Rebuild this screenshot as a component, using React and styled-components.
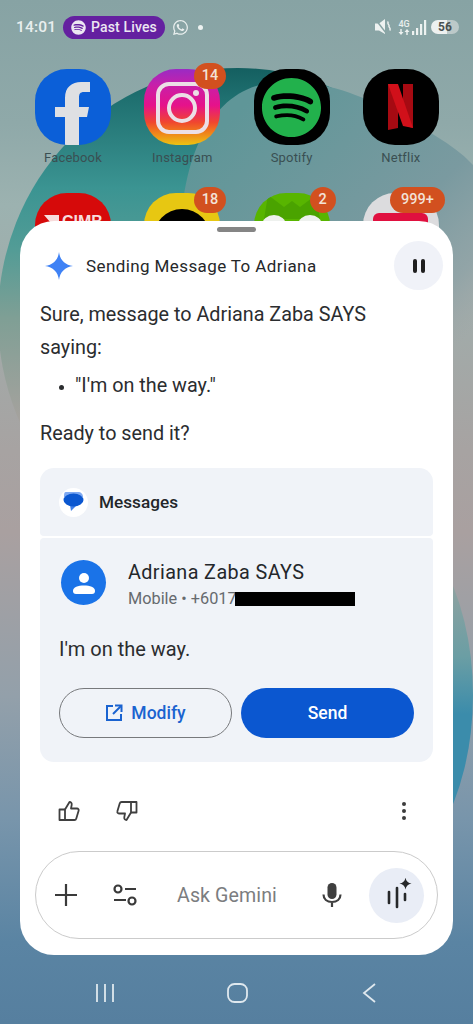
import React from "react";
import styled, { createGlobalStyle } from "styled-components";
import { FaSpotify, FaWhatsapp } from "react-icons/fa";

const Global = createGlobalStyle`
  html, body { margin: 0; padding: 0; overflow: hidden; }
  body { font-family: Roboto, "Liberation Sans", sans-serif; }
`;

const Screen = styled.div`
  position: relative;
  width: 473px;
  height: 1024px;
  overflow: hidden;
  display: flex;
  flex-direction: column;
  background: linear-gradient(180deg, #87a3a4 0, #8fa9a9 12%, #9cb2b0 20%, #a7a3a2 44%, #a9a0a0 52%, #93a0aa 68%, #7895ab 80%, #5a84a3 92%, #567f9f 100%);
`;
const Wallpaper = styled.svg`
  position: absolute;
  inset: 0;
`;
const StatusBar = styled.div`
  position: relative;
  height: 54px;
  flex: none;
  padding: 0 14px 0 16px;
  display: flex;
  align-items: center;
  color: #e9efee;
`;
const Clock = styled.span`
  font-size: 15.5px;
  font-weight: 500;
  width: 47px;
  letter-spacing: 0.2px;
`;
const MediaPill = styled.div`
  display: flex;
  align-items: center;
  gap: 5px;
  width: 102px;
  height: 23px;
  box-sizing: border-box;
  padding-left: 8px;
  border-radius: 12px;
  background: #6420a0;
  font-size: 14px;
  font-weight: 500;
  letter-spacing: 0.15px;
  color: #ece6f2;
`;
const ChatIcon = styled(FaWhatsapp)`
  margin-left: 7px;
  width: 17px;
  height: 17px;
`;
const Dot = styled.span`
  margin-left: 9px;
  width: 5px;
  height: 5px;
  border-radius: 50%;
  background: #edf2f1;
`;
const StatusRight = styled.div`
  margin-left: auto;
  display: flex;
  align-items: center;
`;
const NetBlock = styled.div`
  display: flex;
  flex-direction: column;
  align-items: center;
  margin: 0 1px 0 5px;
  width: 14px;
  font-size: 9px;
  line-height: 9px;
  font-weight: 500;
`;
const Battery = styled.div`
  margin-left: 4px;
  width: 28px;
  height: 14px;
  border-radius: 7px;
  background: linear-gradient(90deg, #eef1f0 58%, #bcc9c9 58%);
  color: #4a5252;
  font-size: 12px;
  font-weight: 700;
  line-height: 14px;
  text-align: center;
`;
const AppGrid = styled.div`
  position: relative;
  padding: 15px 0 0 35px;
  display: grid;
  grid-template-columns: repeat(4, 76px);
  grid-auto-rows: 124px;
  column-gap: 33.3px;
`;
const AppCell = styled.div`
  position: relative;
  display: flex;
  flex-direction: column;
  align-items: center;
`;
const AppIcon = styled.div`
  position: relative;
  width: 76px;
  height: 76px;
  flex: none;
  border-radius: 42%;
  overflow: hidden;
  background: ${(p) => p.$bg};
  display: flex;
  align-items: center;
  justify-content: center;
`;
const AppLabel = styled.span`
  margin-top: 5px;
  font-size: 13px;
  line-height: 16px;
  letter-spacing: 0.2px;
  color: #3a4f52;
`;
const Badge = styled.span`
  position: absolute;
  top: -6px;
  right: ${(p) => p.$right}px;
  height: 26px;
  min-width: 26px;
  box-sizing: border-box;
  padding: 0 ${(p) => p.$pad}px;
  border-radius: 13px;
  background: #d2501f;
  color: #f3e2d8;
  font-size: 14.5px;
  font-weight: 500;
  line-height: 26px;
  text-align: center;
`;
const BrandText = styled.span`
  position: absolute;
  left: 27px;
  top: 20px;
  color: #f7dcdc;
  font: 700 16px "Liberation Sans", sans-serif;
`;
const Sheet = styled.div`
  position: absolute;
  left: 20px;
  top: 221px;
  width: 433px;
  height: 734px;
  box-sizing: border-box;
  border-radius: 34px;
  background: #fff;
  display: flex;
  flex-direction: column;
  color: #1f1f1f;
`;
const Handle = styled.div`
  width: 39px;
  height: 5px;
  margin: 6px auto 0;
  border-radius: 3px;
  background: #858585;
`;
const SheetHeader = styled.div`
  display: flex;
  align-items: center;
  margin-top: 9px;
  padding: 0 10px 0 25px;
`;
const SheetTitle = styled.span`
  margin-left: 13px;
  font-size: 17px;
  letter-spacing: 0.4px;
  color: #26282a;
`;
const PauseButton = styled.div`
  margin-left: auto;
  width: 49px;
  height: 49px;
  border-radius: 50%;
  background: #f0f2f8;
  display: flex;
  align-items: center;
  justify-content: center;
  gap: 4px;
`;
const PauseBar = styled.span`
  width: 4px;
  height: 14px;
  border-radius: 2px;
  background: #1f1f1f;
`;
const Reply = styled.div`
  margin-top: 8px;
  padding: 0 40px 0 20px;
  font-size: 19.8px;
  line-height: 33px;
  color: #2b2d2f;
`;
const ReplyLine = styled.p`
  margin: 0;
`;
const ReplyList = styled.ul`
  margin: 5px 0 15px;
  padding: 0 0 0 35px;
  list-style: disc;
  & li::marker { font-size: 15px; }
`;
const ActionCard = styled.div`
  margin: 18px 20px 0;
  display: flex;
  flex-direction: column;
  gap: 2px;
`;
const CardHeader = styled.div`
  height: 68px;
  display: flex;
  align-items: center;
  padding-left: 19px;
  background: #f0f3f8;
  border-radius: 14px 14px 4px 4px;
`;
const AppBadge = styled.div`
  width: 29px;
  height: 29px;
  border-radius: 50%;
  background: #fff;
  display: flex;
  align-items: center;
  justify-content: center;
`;
const CardAppName = styled.span`
  margin-left: 11px;
  font-size: 17.2px;
  font-weight: 500;
  color: #23262a;
`;
const CardBody = styled.div`
  height: 224px;
  box-sizing: border-box;
  padding: 22px 19px 0;
  background: #f0f3f8;
  border-radius: 4px 4px 14px 14px;
  display: flex;
  flex-direction: column;
`;
const ContactRow = styled.div`
  display: flex;
  padding-left: 2px;
`;
const Avatar = styled.div`
  width: 45px;
  height: 45px;
  border-radius: 50%;
  background: #1a73e8;
  display: flex;
  align-items: center;
  justify-content: center;
`;
const ContactText = styled.div`
  margin-left: 22px;
  display: flex;
  flex-direction: column;
`;
const ContactName = styled.span`
  font-size: 19.8px;
  line-height: 26px;
  letter-spacing: 0.4px;
  color: #24272b;
`;
const ContactPhone = styled.span`
  display: flex;
  align-items: center;
  margin-top: 3px;
  font-size: 16.3px;
  line-height: 20px;
  color: #666a6e;
`;
const Redacted = styled.span`
  margin-left: -2px;
  width: 120px;
  height: 14px;
  background: #000;
`;
const MessageText = styled.p`
  margin: 28px 0 0;
  font-size: 20px;
  line-height: 24px;
  color: #2b2d2f;
`;
const ButtonRow = styled.div`
  margin-top: 27px;
  display: flex;
  gap: 9px;
`;
const PillButton = styled.div`
  width: 173px;
  height: 50px;
  box-sizing: border-box;
  border-radius: 25px;
  display: flex;
  align-items: center;
  justify-content: center;
  gap: 8px;
  font-size: 17.5px;
  font-weight: 500;
  border: ${(p) => (p.$primary ? "none" : "1px solid #77797c")};
  background: ${(p) => (p.$primary ? "#0b57d0" : "transparent")};
  color: ${(p) => (p.$primary ? "#fff" : "#1a63d0")};
`;
const Feedback = styled.div`
  margin-top: 38px;
  height: 22px;
  display: flex;
  align-items: center;
  padding: 0 47px 0 38px;
  gap: 36px;
`;
const MoreDots = styled.div`
  margin-left: auto;
  display: flex;
  flex-direction: column;
  gap: 3px;
`;
const MoreDot = styled.span`
  width: 4px;
  height: 4px;
  border-radius: 50%;
  background: #3c3c3c;
`;
const InputBar = styled.div`
  margin: auto 15px 16px;
  height: 88px;
  box-sizing: border-box;
  border: 1px solid #cbcbcb;
  border-radius: 44px;
  display: flex;
  align-items: center;
  padding: 0 13px 0 18px;
`;
const Placeholder = styled.span`
  margin-left: 40px;
  flex: 1;
  font-size: 19.6px;
  letter-spacing: 0.1px;
  color: #7b7d80;
`;
const FilterSlot = styled.div`
  margin-left: 35px;
  display: flex;
`;
const MicSlot = styled.div`
  margin-right: 25px;
  display: flex;
`;
const LiveButton = styled.div`
  width: 55px;
  height: 55px;
  border-radius: 50%;
  background: #e9edf6;
  display: flex;
  align-items: center;
  justify-content: center;
`;
const NavBar = styled.div`
  position: absolute;
  left: 0;
  right: 0;
  bottom: 0;
  height: 62px;
  padding-left: 1px;
  display: flex;
  justify-content: center;
  align-items: center;
`;
const NavSlot = styled.div`
  width: 132px;
  display: flex;
  justify-content: center;
`;

const apps = [
  {
    name: "Facebook",
    bg: "#0b5fd8",
    art: (
      <svg width="76" height="76" viewBox="0 0 76 76">
        <path d="M30 76V48H20V38H30V29C30 18 37 13 46 13H55V23H49C45 23 44 25 44 29V38H54L52 48H44V76Z" fill="#dfe0e3" />
      </svg>
    ),
  },
  {
    name: "Instagram",
    badge: "14",
    badgeRight: -6,
    bg: "linear-gradient(180deg,#9a2bc4 0,#c91fa8 22%,#e6128a 48%,#f0462f 70%,#f07a1c 82%,#ecc312 100%)",
    art: (
      <svg width="76" height="76" viewBox="0 0 76 76" fill="none" stroke="#ecdfe6" strokeWidth="4">
        <rect x="14" y="15" width="49" height="48" rx="11" />
        <circle cx="38" cy="39" r="13" />
        <circle cx="52" cy="24" r="3" fill="#ecdfe6" stroke="none" />
      </svg>
    ),
  },
  {
    name: "Spotify",
    bg: "#000",
    art: <FaSpotify size={61} color="#22b14c" />,
  },
  {
    name: "Netflix",
    bg: "#000",
    art: (
      <svg width="76" height="76" viewBox="0 0 76 76">
        <path d="M40 15H50V59L40 56Z" fill="#a60a12" />
        <path d="M25 15H35V59L25 61Z" fill="#a60a12" />
        <path d="M25 15H35L50 59L40 57Z" fill="#d1101a" />
      </svg>
    ),
  },
  {
    bg: "#d60a0a",
    art: (
      <>
        <svg width="76" height="76" viewBox="0 0 76 76">
          <path d="M9 22H24V36H18L15 29Z" fill="#f7dcdc" />
        </svg>
        <BrandText>CIMB</BrandText>
      </>
    ),
  },
  {
    badge: "18",
    badgeRight: -6,
    bg: "#e7c712",
    art: (
      <svg width="76" height="76" viewBox="0 0 76 76">
        <ellipse cx="38" cy="46" rx="29" ry="30" fill="#000" />
        <circle cx="23" cy="33" r="5" fill="#e7c712" />
        <circle cx="53" cy="33" r="5" fill="#e7c712" />
      </svg>
    ),
  },
  {
    badge: "2",
    badgeRight: -6,
    bg: "#58b500",
    art: (
      <svg width="76" height="76" viewBox="0 0 76 76">
        <path d="M14 2L30 14L38 8L46 14L62 2L66 26H10Z" fill="#4aa300" />
        <ellipse cx="20" cy="32" rx="12" ry="10" fill="#eef1ee" />
        <ellipse cx="56" cy="32" rx="12" ry="10" fill="#eef1ee" />
      </svg>
    ),
  },
  {
    badge: "999+",
    badgeRight: -6,
    badgePad: 11,
    bg: "#dcdcde",
    art: (
      <svg width="76" height="76" viewBox="0 0 76 76">
        <rect x="10" y="20" width="55" height="50" rx="6" fill="#e0103f" />
      </svg>
    ),
  },
];

const Spark = ({ size, fill }) => (
  <svg width={size} height={size} viewBox="0 0 28 28">
    <path d="M14 0C15 8 20 13 28 14C20 15 15 20 14 28C13 20 8 15 0 14C8 13 13 8 14 0Z" fill={fill} />
  </svg>
);

const ThumbFlip = styled.svg`
  transform: ${(p) => (p.$flip ? "rotate(180deg)" : "none")};
`;

const Thumb = ({ flip }) => (
  <ThumbFlip $flip={flip} width="22" height="22" viewBox="0 0 22 22" fill="none" stroke="#3f3f3f" strokeWidth="1.8" strokeLinejoin="round">
    <path d="M7 9.5L11.5 2C13 2 14 3.2 13.7 4.8L13 8.5H19C20.3 8.5 21 9.6 20.6 10.8L18.3 18.4C18 19.4 17.3 20 16.4 20H7Z" />
    <path d="M7 9.5H1.5V20H7" />
  </ThumbFlip>
);

export default function App() {
  return (
    <Screen>
      <Global />
      <Wallpaper width="473" height="1024" viewBox="0 0 473 1024">
        <defs>
          <linearGradient id="tealA" x1="0" y1="0" x2="0" y2="1">
            <stop offset="0" stopColor="#145f60" />
            <stop offset="0.06" stopColor="#1f7070" />
            <stop offset="0.24" stopColor="#3b9492" />
            <stop offset="0.36" stopColor="#529c96" />
            <stop offset="0.5" stopColor="#7f9f95" />
            <stop offset="0.72" stopColor="#a8a29e" />
          </linearGradient>
          <linearGradient id="tealB" gradientUnits="userSpaceOnUse" x1="250" y1="100" x2="473" y2="330">
            <stop offset="0" stopColor="#5f9698" />
            <stop offset="0.6" stopColor="#7a9aa0" />
            <stop offset="0.85" stopColor="#8fa2a6" stopOpacity="0.8" />
            <stop offset="1" stopColor="#9ea4a6" stopOpacity="0" />
          </linearGradient>
          <linearGradient id="tealC" x1="0" y1="0" x2="0" y2="1">
            <stop offset="0.15" stopColor="#9aa39f" />
            <stop offset="0.4" stopColor="#6b9ea4" />
            <stop offset="0.55" stopColor="#3b8cab" />
          </linearGradient>
          <clipPath id="leftOfFade">
            <rect x="-10" y="0" width="450" height="600" />
          </clipPath>
        </defs>
        <ellipse cx="238" cy="318" rx="240" ry="250" fill="url(#tealA)" clipPath="url(#leftOfFade)" />
        <path d="M180 260C178 150 215 84 280 82C330 80 370 100 390 112C430 130 460 150 473 165V480H180Z" fill="url(#tealB)" />
        <ellipse cx="360" cy="695" rx="113" ry="192" fill="url(#tealC)" />
      </Wallpaper>

      <StatusBar>
        <Clock>14:01</Clock>
        <MediaPill>
          <FaSpotify size={15} />
          Past Lives
        </MediaPill>
        <ChatIcon />
        <Dot />
        <StatusRight>
          <svg width="17" height="16" viewBox="0 0 17 16" fill="#eef2f1">
            <path d="M0 4.500H4L10 0V15L4 11.500H0Z" />
            <path d="M1 1L11 14" stroke="#88a4a4" strokeWidth="1.400" />
            <path d="M12.500 2.500C14 3.500 12 4.500 13.500 5.500C15 6.500 13 7.500 14.500 8.500C16 9.500 14 10.500 15.500 11.500" stroke="#eef2f1" strokeWidth="1.500" fill="none" />
          </svg>
          <NetBlock>
            4G
            <svg width="12" height="6" viewBox="0 0 12 6" fill="#eef2f1">
              <path d="M3 6L0.500 3H2.300V0H3.700V3H5.500Z" />
              <path d="M9 0L6.500 3H8.300V6H9.700V3H11.500Z" />
            </svg>
          </NetBlock>
          <svg width="15" height="16" viewBox="0 0 15 16" fill="#eef2f1">
            <rect x="0" y="12" width="2.200" height="4" />
            <rect x="4" y="9" width="2.200" height="7" />
            <rect x="8" y="5" width="2.200" height="11" />
            <rect x="12" y="1" width="2.200" height="15" />
          </svg>
          <Battery>56</Battery>
        </StatusRight>
      </StatusBar>

      <AppGrid>
        {apps.map((a, i) => (
          <AppCell key={i}>
            <AppIcon $bg={a.bg}>{a.art}</AppIcon>
            {a.name && <AppLabel>{a.name}</AppLabel>}
            {a.badge && (
              <Badge $right={a.badgeRight} $pad={a.badgePad ?? 8}>
                {a.badge}
              </Badge>
            )}
          </AppCell>
        ))}
      </AppGrid>

      <Sheet>
        <Handle />
        <SheetHeader>
          <Spark size={28} fill="#3f82f5" />
          <SheetTitle>Sending Message To Adriana</SheetTitle>
          <PauseButton>
            <PauseBar />
            <PauseBar />
          </PauseButton>
        </SheetHeader>
        <Reply>
          <ReplyLine>Sure, message to Adriana Zaba SAYS saying:</ReplyLine>
          <ReplyList>
            <li>"I'm on the way."</li>
          </ReplyList>
          <ReplyLine>Ready to send it?</ReplyLine>
        </Reply>
        <ActionCard>
          <CardHeader>
            <AppBadge>
              <svg width="21" height="22" viewBox="0 0 21 22">
                <path d="M3 1H15C18 1 20 3 20 6H1C1 3 1 1 3 1Z" fill="#7ea9f2" />
                <path d="M7 14H14L8 20Z" fill="#3f7fe8" />
                <ellipse cx="10.500" cy="9" rx="10" ry="6.500" fill="#0b57d0" />
              </svg>
            </AppBadge>
            <CardAppName>Messages</CardAppName>
          </CardHeader>
          <CardBody>
            <ContactRow>
              <Avatar>
                <svg width="24" height="24" viewBox="0 0 24 24" fill="#fff">
                  <circle cx="12" cy="7" r="5" />
                  <path d="M1 20C1 16 6 14.500 12 14.500C18 14.500 23 16 23 20C23 22 22 23 20 23H4C2 23 1 22 1 20Z" />
                </svg>
              </Avatar>
              <ContactText>
                <ContactName>Adriana Zaba SAYS</ContactName>
                <ContactPhone>
                  Mobile • +6017
                  <Redacted />
                </ContactPhone>
              </ContactText>
            </ContactRow>
            <MessageText>I'm on the way.</MessageText>
            <ButtonRow>
              <PillButton>
                <svg width="18" height="18" viewBox="0 0 18 18" fill="none" stroke="#1a63d0" strokeWidth="2">
                  <path d="M8 2H2V16H16V10" />
                  <path d="M10 1.500H16.500V8" />
                  <path d="M16 2L8 10" />
                </svg>
                Modify
              </PillButton>
              <PillButton $primary>Send</PillButton>
            </ButtonRow>
          </CardBody>
        </ActionCard>
        <Feedback>
          <Thumb />
          <Thumb flip />
          <MoreDots>
            <MoreDot />
            <MoreDot />
            <MoreDot />
          </MoreDots>
        </Feedback>
        <InputBar>
          <svg width="24" height="24" viewBox="0 0 24 24" stroke="#3a3a3a" strokeWidth="2.200">
            <path d="M12 1V23M1 12H23" />
          </svg>
          <FilterSlot>
            <svg width="24" height="24" viewBox="0 0 24 24" fill="none" stroke="#3a3a3a" strokeWidth="2.200">
              <circle cx="5" cy="6" r="3.500" />
              <path d="M12 6H23M1 17H13" />
              <circle cx="19" cy="18" r="3.500" />
            </svg>
          </FilterSlot>
          <Placeholder>Ask Gemini</Placeholder>
          <MicSlot>
            <svg width="24" height="24" viewBox="0 0 24 24" fill="none">
              <rect x="7.500" y="0" width="9" height="16" rx="4.500" fill="#3f3f3f" />
              <path d="M3.500 11.500C3.500 16 7 19 12 19C17 19 20.500 16 20.500 11.500M12 19V24" stroke="#3f3f3f" strokeWidth="2.200" />
            </svg>
          </MicSlot>
          <LiveButton>
            <svg width="34" height="34" viewBox="0 0 34 34" fill="none" stroke="#26282a" strokeWidth="2.600" strokeLinecap="round">
              <path d="M9 14V25" />
              <path d="M17 10V29" />
              <path d="M25 16V22" />
              <path d="M25.500 -0.500C26 3 28 5 31.500 5.500C28 6 26 8 25.500 11.500C25 8 23 6 19.500 5.500C23 5 25 3 25.500 -0.500Z" fill="#26282a" stroke="none" />
            </svg>
          </LiveButton>
        </InputBar>
      </Sheet>

      <NavBar>
        <NavSlot>
          <svg width="20" height="20" viewBox="0 0 20 20" stroke="#dfe8ee" strokeWidth="1.800">
            <path d="M2 1V19M10 1V19M18 1V19" />
          </svg>
        </NavSlot>
        <NavSlot>
          <svg width="21" height="20" viewBox="0 0 21 20" fill="none" stroke="#dfe8ee" strokeWidth="1.800">
            <rect x="1" y="1" width="19" height="18" rx="6.500" />
          </svg>
        </NavSlot>
        <NavSlot>
          <svg width="14" height="20" viewBox="0 0 14 20" fill="none" stroke="#dfe8ee" strokeWidth="1.800">
            <path d="M13 1L2 10L13 19" />
          </svg>
        </NavSlot>
      </NavBar>
    </Screen>
  );
}
